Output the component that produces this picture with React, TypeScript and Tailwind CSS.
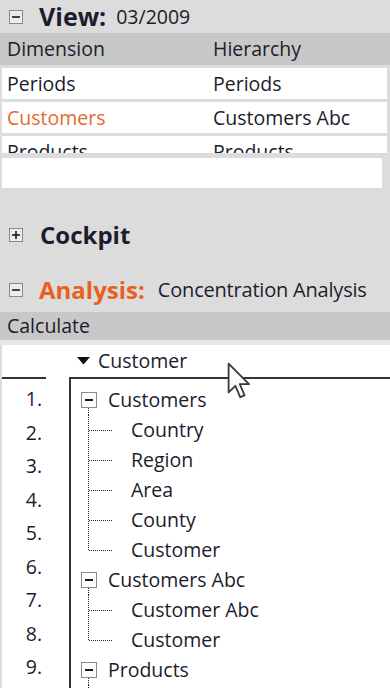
import React from "react";

const ink = "text-[#1c1c2c]";

const BoxIcon = ({ plus = false }: { plus?: boolean }) => (
  <svg width="14" height="14" viewBox="0 0 14 14" className="shrink-0">
    <rect x="0.5" y="0.5" width="13" height="13" fill="#ececec" stroke="#8a8a8a" />
    <line x1="3" y1="7" x2="11" y2="7" stroke="#1a1a1a" strokeWidth="1.6" />
    {plus && <line x1="7" y1="3" x2="7" y2="11" stroke="#1a1a1a" strokeWidth="1.6" />}
  </svg>
);

const viewRows = [
  { dim: "Periods", hier: "Periods", active: false },
  { dim: "Customers", hier: "Customers Abc", active: true },
  { dim: "Products", hier: "Products", active: false },
];

const tree = [
  { name: "Customers", children: ["Country", "Region", "Area", "County", "Customer"] },
  { name: "Customers Abc", children: ["Customer Abc", "Customer"] },
  { name: "Products", children: ["Product"] },
];

// group node: box + dotted line going down
const GroupNode = ({ name }: { name: string }) => (
  <div className="flex h-[30px] items-center">
    <svg width="27" height="30" viewBox="0 0 27 30" className="shrink-0">
      <rect x="0.5" y="7.5" width="15" height="15" fill="#fff" stroke="#8a8a8a" />
      <line x1="4" y1="15" x2="12" y2="15" stroke="#1a1a1a" strokeWidth="2" />
      <line x1="7.5" y1="23" x2="7.5" y2="30" stroke="#222" strokeDasharray="1 1" />
    </svg>
    <span>{name}</span>
  </div>
);

const LeafNode = ({ name, last }: { name: string; last: boolean }) => (
  <div className="flex h-[30px] items-center">
    <svg width="50" height="30" viewBox="0 0 50 30" className="shrink-0">
      <line x1="7.5" y1="0" x2="7.5" y2={last ? 15.5 : 30} stroke="#222" strokeDasharray="1 1" />
      <line x1="8" y1="15.5" x2="32" y2="15.5" stroke="#222" strokeDasharray="1 1" />
    </svg>
    <span>{name}</span>
  </div>
);

const Cursor = () => (
  <svg width="26" height="38" viewBox="0 0 13 19" className="absolute left-[227px] top-[362px]">
    <path
      d="M0.8 0.8 L0.8 15.2 L4.2 11.9 L6.6 17.6 L8.8 16.7 L6.4 11.1 L11 11.1 Z"
      fill="#fbfbfb"
      stroke="#3a3a3a"
      strokeWidth="0.9"
      strokeLinejoin="round"
    />
  </svg>
);

export default function App() {
  return (
    <div
      className={`relative h-[688px] w-[390px] overflow-hidden bg-[#dcdcdc] ${ink}`}
      style={{ fontFamily: '"Open Sans", "DejaVu Sans", sans-serif' }}
    >
      {/* View header */}
      <div className="flex h-[33px] items-center pl-[9px]">
        <BoxIcon />
        <span className="ml-[16px] text-[25px] font-bold leading-none">View:</span>
        <span className="ml-[10px] text-[19.5px] leading-none">03/2009</span>
      </div>

      {/* table */}
      <div className="flex h-[32px] items-center bg-[#c8c8c8] text-[19.5px]">
        <span className="w-[213px] pl-[7px]">Dimension</span>
        <span>Hierarchy</span>
      </div>
      <div className="ml-[2px] mr-[3px] flex h-[88px] flex-col gap-[3px] overflow-hidden pt-[3px] text-[19.5px]">
        {viewRows.map((r) => (
          <div key={r.dim} className="flex h-[31px] shrink-0 items-center bg-white">
            <span className={`w-[211px] pl-[5px] ${r.active ? "text-[#e8682c]" : ""}`}>{r.dim}</span>
            <span>{r.hier}</span>
          </div>
        ))}
      </div>
      <div className="ml-[2px] mr-[8px] mt-[5px] h-[30px] bg-white" />

      {/* Cockpit / Analysis */}
      <div className="flex flex-col gap-[25px] pb-[7px] pl-[9px] pt-[32px]">
        <div className="flex h-[30px] items-center">
          <BoxIcon plus />
          <span className="ml-[17px] text-[24px] font-bold leading-none">Cockpit</span>
        </div>
        <div className="flex h-[30px] items-center">
          <BoxIcon />
          <span className="ml-[16px] text-[24px] font-bold leading-none text-[#e8601e]">Analysis:</span>
          <span className="ml-[13px] text-[20px] leading-none tracking-[-0.2px]">Concentration Analysis</span>
        </div>
      </div>

      <div className="flex h-[28px] items-center bg-[#c8c8c8] pl-[7px] text-[19.5px]">Calculate</div>
      <div className="h-[5px] bg-[#e6e6e6]" />

      {/* Analysis body */}
      <div className="ml-[2px] h-[343px] bg-white text-[19.5px]">
        <div className="flex h-[32px] items-center pl-[75px]">
          <svg width="13" height="8" viewBox="0 0 13 8" className="shrink-0">
            <path d="M0 0 L13 0 L6.5 7.5 Z" fill="#111" />
          </svg>
          <span className="ml-[8px]">Customer</span>
        </div>
        <div className="flex">
          <div className="w-[67px] shrink-0">
            <div className="flex w-[44px] flex-col border-t-2 border-[#333] pt-[3px]">
              {[1, 2, 3, 4, 5, 6, 7, 8, 9].map((n) => (
                <div key={n} className="flex h-[33.5px] items-center justify-end pr-[4px]">
                  {n}.
                </div>
              ))}
            </div>
          </div>
          <div className="flex h-[320px] flex-1 flex-col overflow-hidden border-l-2 border-t-2 border-[#333] pl-[10px] pt-[6px]">
            {tree.map((g) => (
              <div key={g.name} className="flex flex-col">
                <GroupNode name={g.name} />
                {g.children.map((c, i) => (
                  <LeafNode key={g.name + c} name={c} last={i === g.children.length - 1} />
                ))}
              </div>
            ))}
          </div>
        </div>
      </div>

      <Cursor />
    </div>
  );
}
